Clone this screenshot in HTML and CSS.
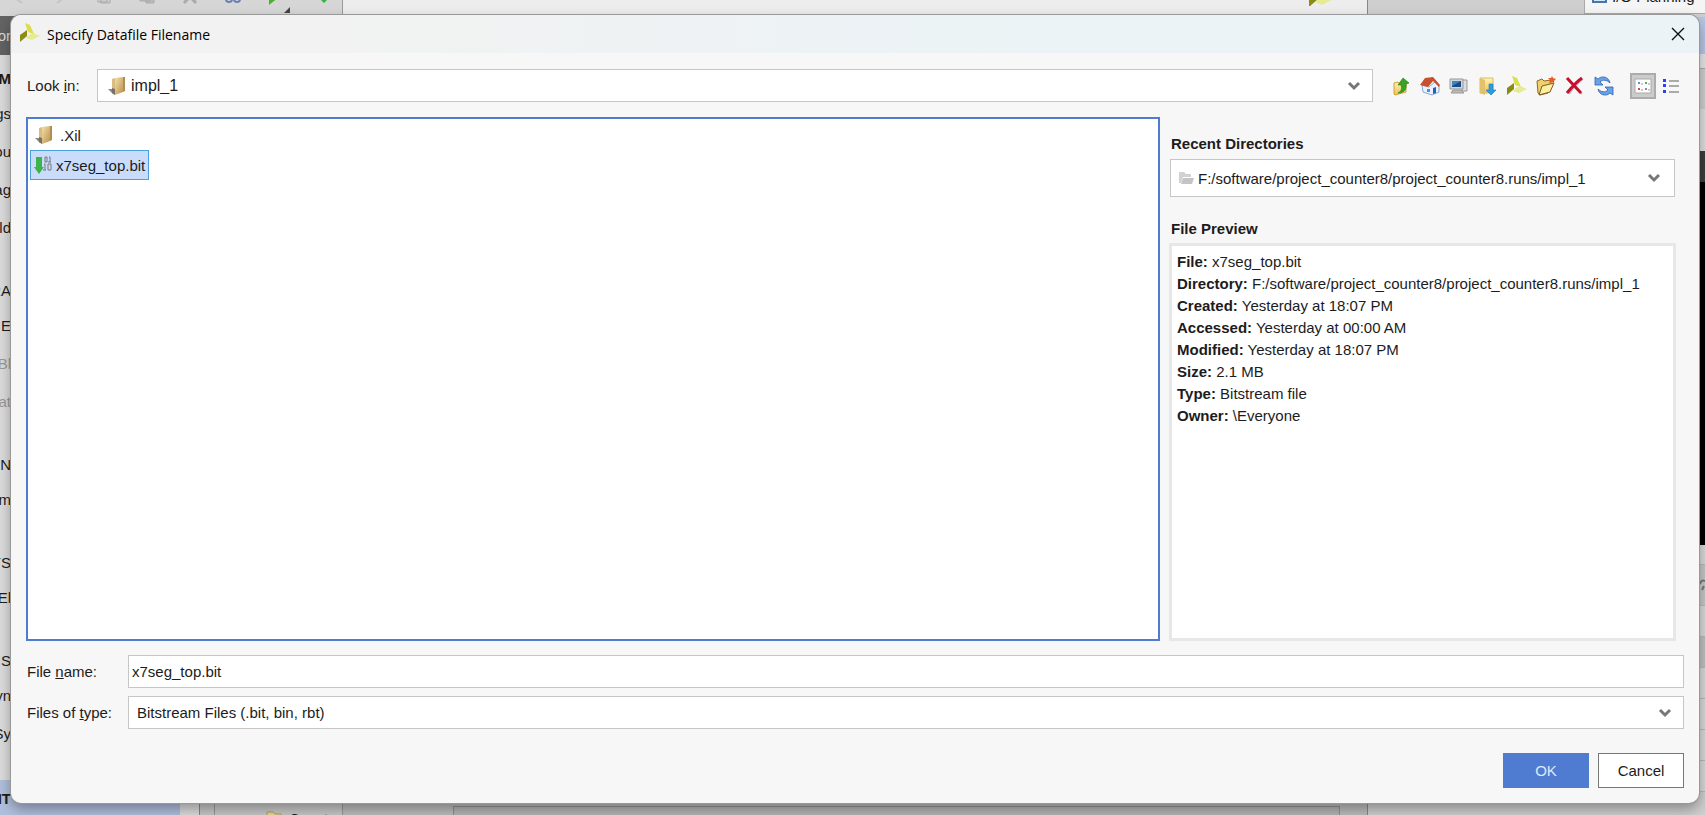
FILE: index.html
```html
<!DOCTYPE html>
<html lang="en">
<head>
    <meta charset="UTF-8">
    <meta name="viewport" content="width=device-width, initial-scale=1.0">
    <title>Specify Datafile Filename</title>
    <link rel="stylesheet" href="styles.css">
</head>
<body>
    <!-- Shared icons -->
    <svg class="defs" aria-hidden="true">
        <defs>
            <linearGradient id="gold" x1="0" y1="0" x2="1" y2="1">
                <stop offset="0" stop-color="#f3dfa6"/>
                <stop offset="1" stop-color="#bb9250"/>
            </linearGradient>
            <linearGradient id="yellow" x1="0" y1="0" x2="0" y2="1">
                <stop offset="0" stop-color="#fdf3b4"/>
                <stop offset="1" stop-color="#f0c04c"/>
            </linearGradient>
            <symbol id="logo" viewBox="0 0 20 20">
                <path d="M5 0l5 2 4 9-6-2z" fill="#d9de4a"/>
                <path d="M0 12l7-5v6l-7 6z" fill="#8c8c10"/>
                <path d="M9 12l4-2 7 3-8 4-6-2z" fill="#e6ea90"/>
            </symbol>
            <symbol id="folder" viewBox="0 0 20 20">
                <path d="M1 13h5v5z" fill="#8a8782"/>
                <path d="M5 3l3-1v17l-3-2z" fill="#d9bd83"/>
                <path d="M8 2l8-1v15l-8 3z" fill="url(#gold)"/>
                <path d="M16 1h2v14l-2 1z" fill="#b08d52"/>
                <path d="M5 12l3 1v6l-3-2z" fill="#77706a"/>
            </symbol>
            <symbol id="chevron" viewBox="0 0 14 10">
                <path d="M2 2l5 5 5-5" fill="none" stroke="#777" stroke-width="3"/>
            </symbol>
        </defs>
    </svg>

    <!-- Main window behind the dialog -->
    <div class="app">
        <div class="left-pane">
            <div class="app-toolbar">
                <svg width="16" height="16" viewBox="0 0 16 16"><path d="M12 3L4 9l8 6" fill="none" stroke="#c4c4c4" stroke-width="2"/></svg>
                <svg width="16" height="16" viewBox="0 0 16 16"><path d="M4 3l8 6-8 6" fill="none" stroke="#c4c4c4" stroke-width="2"/></svg>
                <svg width="16" height="16" viewBox="0 0 16 16"><path d="M2 1h9v13H2zM5 4h9v11H5z" fill="#ccc" stroke="#aaa"/></svg>
                <svg width="16" height="16" viewBox="0 0 16 16"><path d="M1 1h10v12H1zM7 6h8v9H7z" fill="#bbb" stroke="#aaa"/></svg>
                <svg width="16" height="16" viewBox="0 0 16 16"><path d="M2 2l12 13M14 2L2 15" stroke="#aaa" stroke-width="3"/></svg>
                <svg width="16" height="16" viewBox="0 0 16 16"><circle cx="4" cy="11" r="3" fill="none" stroke="#6a80b4" stroke-width="2"/><circle cx="12" cy="11" r="3" fill="none" stroke="#6a80b4" stroke-width="2"/></svg>
                <svg width="24" height="24" viewBox="0 0 24 24"><path d="M1 0l10 7-10 8z" fill="#46b32c"/><path d="M22 17v6h-6z" fill="#444"/></svg>
                <svg width="16" height="16" viewBox="0 0 16 16"><path d="M3 4h4v6h3l-5 5-5-5h3z" fill="#36b14b"/><path d="M11 6v6M14 6v6" stroke="#666"/></svg>
            </div>
            <div class="left-body">
                <nav class="flow">
                    <div class="flow-title"><span>or</span></div>
                    <div class="flow-group">
                        <div class="flow-head strong"><span>M</span></div>
                        <div class="flow-item"><span>gs</span></div>
                        <div class="flow-item"><span>ou</span></div>
                        <div class="flow-item"><span>ag</span></div>
                        <div class="flow-item"><span>ald</span></div>
                    </div>
                    <div class="flow-group">
                        <div class="flow-head"><span>RA</span></div>
                        <div class="flow-item"><span>E</span></div>
                        <div class="flow-item off"><span>Bl</span></div>
                        <div class="flow-item off"><span>at</span></div>
                    </div>
                    <div class="flow-group">
                        <div class="flow-head"><span>ON</span></div>
                        <div class="flow-item"><span>m</span></div>
                    </div>
                    <div class="flow-group">
                        <div class="flow-head"><span>YS</span></div>
                        <div class="flow-item"><span>El</span></div>
                    </div>
                    <div class="flow-group">
                        <div class="flow-head"><span>IS</span></div>
                        <div class="flow-item"><span>yn</span></div>
                        <div class="flow-item"><span>Sy</span></div>
                    </div>
                    <div class="flow-head strong current"><span>IT</span></div>
                </nav>
                <div class="tree">
                    <div class="tree-row">
                        <svg width="16" height="13" viewBox="0 0 16 13"><path d="M1 1h6l2 2h6v9H1z" fill="#e5d79b" stroke="#b5a050"/></svg>
                        <span>Const</span>
                    </div>
                </div>
            </div>
        </div>
        <div class="mid-pane">
            <div class="mid-top"><svg width="34" height="20"><use href="#logo" width="34" height="22"/></svg></div>
            <div class="mid-box"></div>
        </div>
        <div class="right-pane">
            <div class="right-top">
                <div class="layout-picker">
                    <svg width="16" height="16" viewBox="0 0 16 16"><path d="M1 1h13v13H1z" fill="#cdeaf8" stroke="#4d74a8" stroke-width="2"/></svg>
                    <span>I/O Planning</span>
                </div>
            </div>
            <div class="bar blue"></div>
            <div class="bar pale"></div>
            <div class="bar grey"></div>
            <div class="bar light"></div>
            <div class="bar dark"></div>
            <div class="canvas"></div>
            <div class="rows">
                <div class="row short"></div>
                <div class="row tall">
                    <svg width="6" height="14" viewBox="0 0 6 14"><path d="M1 6c1-4 3-4 5-3M3 12l2-4" fill="none" stroke="#777" stroke-width="2"/></svg>
                </div>
                <div class="row"></div>
                <div class="row head"></div>
                <div class="row"></div>
                <div class="row"></div>
                <div class="row"></div>
                <div class="row"></div>
            </div>
        </div>
    </div>

    <form class="dialog" role="dialog" aria-labelledby="dialogTitle">
        <header class="titlebar">
            <svg class="title-icon" width="20" height="20"><use href="#logo"/></svg>
            <h1 id="dialogTitle">Specify Datafile Filename</h1>
            <button type="button" class="close" aria-label="Close">
                <svg width="14" height="14" viewBox="0 0 14 14"><path d="M1 1l12 12M13 1L1 13" stroke="#111" stroke-width="1.4"/></svg>
            </button>
        </header>

        <div class="content">
            <div class="look-row">
                <label for="lookIn">Look <u>i</u>n:</label>
                <div class="combo look-combo">
                    <svg width="20" height="20"><use href="#folder"/></svg>
                    <select id="lookIn"><option>impl_1</option></select>
                    <svg class="arrow" width="14" height="10"><use href="#chevron"/></svg>
                </div>
                <div class="tools">
                    <button type="button" aria-label="Up one level">
                        <svg width="20" height="20" viewBox="0 0 20 20">
                            <path d="M3 7l4-1 1 1h7v9l-11 3-1-1z" fill="url(#yellow)" stroke="#d1a23c"/>
                            <path d="M7 17c4-2 4-5 3-8H7l5-7 6 5-3 1c1 5-2 9-8 9z" fill="#38a324" stroke="#1f7a18" stroke-width=".6"/>
                        </svg>
                    </button>
                    <button type="button" aria-label="Home">
                        <svg width="20" height="20" viewBox="0 0 20 20">
                            <path d="M2 9l7 2 7-6 3 5v6l-7 3-9-3z" fill="#eaf2fc" stroke="#85a9d8"/>
                            <path d="M0 9l5-7 8-1 7 8-1 2-6-6-5 6z" fill="#c8502c"/>
                            <path d="M13 12l3-1v6l-3 1z" fill="#2463b4"/>
                            <path d="M7 13h3v3H7z" fill="#4f8fd8"/>
                        </svg>
                    </button>
                    <button type="button" aria-label="Computer">
                        <svg width="20" height="20" viewBox="0 0 20 20">
                            <path d="M13 4h5v11h-5z" fill="#ddd" stroke="#999"/>
                            <path d="M1 3h13v10H1z" fill="#d4d4d4" stroke="#999"/>
                            <path d="M3 5h9v6H3z" fill="#174c8c"/>
                            <path d="M3 5h9l-9 5z" fill="#3b84c4"/>
                            <path d="M4 14h8l3 3H2z" fill="#bbb" stroke="#999"/>
                        </svg>
                    </button>
                    <button type="button" aria-label="Downloads">
                        <svg width="20" height="20" viewBox="0 0 20 20">
                            <path d="M2 2h13v15H2z" fill="url(#yellow)" stroke="#d8ba6b"/>
                            <path d="M2 2l5 2v15l-5-2z" fill="#e3c06a"/>
                            <path d="M11 8h4v6h3l-5 5-5-5h3z" fill="#2d9be0" stroke="#1b7cc0" stroke-width=".6"/>
                        </svg>
                    </button>
                    <button type="button" aria-label="Install directory">
                        <svg width="20" height="20"><use href="#logo"/></svg>
                    </button>
                    <button type="button" aria-label="New folder">
                        <svg width="20" height="20" viewBox="0 0 20 20">
                            <path d="M1 5l5-2 2 2 7-1v4l-3 9-8 2-2-2z" fill="#f3cf6c" stroke="#8b6a20"/>
                            <path d="M6 10l12-3-4 9-11 3z" fill="#fdeea4" stroke="#7a5c1a"/>
                            <path d="M16 0l1 2 3 1-2 2v3l-2-2-3 1 1-3-2-2 3 0z" fill="#ee5a24"/>
                        </svg>
                    </button>
                    <button type="button" aria-label="Delete">
                        <svg width="20" height="20" viewBox="0 0 20 20">
                            <path d="M4 4l13 14M18 3C12 7 8 12 4 18" fill="none" stroke="#bbb" stroke-width="2"/>
                            <path d="M2 2l14 15M17 2C11 6 7 11 2 17" fill="none" stroke="#c4122e" stroke-width="3"/>
                        </svg>
                    </button>
                    <button type="button" aria-label="Refresh">
                        <svg width="20" height="20" viewBox="0 0 20 20">
                            <path d="M1 1v8h8L6 6c3-3 7-2 10 1C15 1 8-1 4 3z" fill="#6ba2e6" stroke="#2b62b4" stroke-width=".8"/>
                            <path d="M19 19v-8h-8l3 3c-3 3-7 2-10-1 1 6 8 8 12 4z" fill="#6ba2e6" stroke="#2b62b4" stroke-width=".8"/>
                        </svg>
                    </button>
                </div>
                <div class="views">
                    <button type="button" class="pressed" aria-label="Icon view">
                        <svg width="20" height="20" viewBox="0 0 20 20">
                            <path d="M2 3h16v14H2z" fill="#fff" stroke="#aaa"/>
                            <path d="M5 6h2v2H5z" fill="#5a8fe0"/><path d="M12 6h2v2h-2z" fill="#4fae62"/>
                            <path d="M5 12h2v2H5z" fill="#d4494f"/><path d="M12 12h2v2h-2z" fill="#8a8f98"/>
                            <path d="M8 8h2M15 8h2M8 14h2M15 14h2" stroke="#999"/>
                        </svg>
                    </button>
                    <button type="button" aria-label="List view">
                        <svg width="18" height="18" viewBox="0 0 18 18">
                            <path d="M1 2h3v3H1zM1 7h3v3H1zM1 13h3v3H1z" fill="#2a40ff"/>
                            <path d="M7 4h10M7 9h10M7 15h10" stroke="#aaa" stroke-width="2"/>
                        </svg>
                    </button>
                </div>
            </div>

            <div class="browser">
                <ul class="files">
                    <li><button type="button" class="file">
                        <svg width="20" height="20"><use href="#folder"/></svg>
                        <span class="folder-name">.Xil</span>
                    </button></li>
                    <li><button type="button" class="file selected">
                        <svg width="18" height="20" viewBox="0 0 18 20">
                            <path d="M2 2h6v10h2l-5 7-5-7h2z" fill="#3cb44a"/>
                            <g fill="none" stroke="#777">
                                <path d="M11 2h2v5h-2zM15 2h1v5M14 7h3"/>
                                <path d="M10 9h1v6M9 15h3M14 9h3v6h-3z"/>
                            </g>
                        </svg>
                        <span>x7seg_top.bit</span>
                    </button></li>
                </ul>

                <aside class="side">
                    <label class="side-title" for="recent">Recent Directories</label>
                    <div class="combo recent-combo">
                        <svg width="16" height="16" viewBox="0 0 16 16">
                            <path d="M1 2h5l2 2h5v3H5l-2 6H1z" fill="#d2d2d2"/>
                            <path d="M5 8h11l-2 6H3z" fill="#c4c4c4"/>
                        </svg>
                        <select id="recent"><option>F:/software/project_counter8/project_counter8.runs/impl_1</option></select>
                        <svg class="arrow" width="14" height="10"><use href="#chevron"/></svg>
                    </div>
                    <h2 class="side-title">File Preview</h2>
                    <div class="preview">
                        <p><b>File:</b> x7seg_top.bit</p>
                        <p><b>Directory:</b> F:/software/project_counter8/project_counter8.runs/impl_1</p>
                        <p><b>Created:</b> Yesterday at 18:07 PM</p>
                        <p><b>Accessed:</b> Yesterday at 00:00 AM</p>
                        <p><b>Modified:</b> Yesterday at 18:07 PM</p>
                        <p><b>Size:</b> 2.1 MB</p>
                        <p><b>Type:</b> Bitstream file</p>
                        <p><b>Owner:</b> \Everyone</p>
                    </div>
                </aside>
            </div>

            <div class="fields">
                <label for="fileName">File <u>n</u>ame:</label>
                <input type="text" id="fileName" value="x7seg_top.bit">
                <label for="fileType">Files of <u>t</u>ype:</label>
                <div class="combo">
                    <select id="fileType"><option>Bitstream Files (.bit, bin, rbt)</option></select>
                    <svg class="arrow" width="14" height="10"><use href="#chevron"/></svg>
                </div>
            </div>

            <div class="actions">
                <button type="submit" class="btn primary">OK</button>
                <button type="button" class="btn">Cancel</button>
            </div>
        </div>
    </form>
</body>
</html>
```

FILE: styles.css
```css
* {
    box-sizing: border-box;
}
body {
    margin: 0;
    height: 100vh;
    overflow: hidden;
    font-family: "Liberation Sans", Arial, sans-serif;
    font-size: 15px;
    color: #1c1c1c;
}
button, input, select {
    font: inherit;
    color: inherit;
}
svg {
    display: block;
    flex: none;
}
h1, h2, p, ul {
    margin: 0;
    padding: 0;
}
.defs {
    position: absolute;
    width: 0;
    height: 0;
}

/* main window */
.app {
    display: flex;
    height: 100%;
    background-color: #d0d0d0;
}
.left-pane {
    width: 343px;
    display: flex;
    flex-direction: column;
    border-right: 1px solid #999;
    background-color: #c8c8c8;
}
.app-toolbar {
    height: 16px;
    flex: none;
    display: flex;
    align-items: flex-end;
    gap: 27px;
    padding: 0 10px 2px;
    overflow: hidden;
    background-color: #d6d6d6;
}
.app-toolbar svg {
    margin-bottom: 10px;
}
.app-toolbar svg:nth-child(7) {
    margin-bottom: 0;
}
.left-body {
    flex: 1;
    min-height: 0;
    display: flex;
}
.flow {
    width: 200px;
    border-right: 1px solid #888;
    background-color: #dcdcdc;
    overflow: hidden;
}
.flow span {
    width: 11px;
    display: flex;
    justify-content: flex-end;
}
.flow-title {
    height: 39px;
    margin-bottom: 7px;
    display: flex;
    align-items: center;
    background-color: #636363;
    color: #ddd;
}
.flow-group {
    margin-bottom: 28px;
}
.flow-head, .flow-item {
    height: 32px;
    display: flex;
    align-items: center;
}
.flow-item {
    height: 38px;
}
.strong {
    font-weight: bold;
}
.off {
    color: #999;
}
.current {
    height: 36px;
    width: 180px;
    background-color: #b0bfdc;
}
.tree {
    flex: 1;
    margin-left: 14px;
    display: flex;
    align-items: flex-end;
    border-left: 1px solid #999;
    overflow: hidden;
}
.tree-row {
    height: 4px;
    display: flex;
    gap: 7px;
    padding-left: 51px;
    line-height: 16px;
}
.mid-pane {
    flex: 1;
    display: flex;
    flex-direction: column;
    justify-content: space-between;
    border-right: 1px solid #888;
    background-color: #bdbdbd;
}
.mid-top {
    height: 15px;
    padding-right: 30px;
    display: flex;
    align-items: flex-end;
    justify-content: flex-end;
    overflow: hidden;
    background-color: #ededed;
}
.mid-top svg {
    margin-bottom: 9px;
}
.mid-box {
    height: 9px;
    margin: 0 27px 0 110px;
    border: 1px solid #909090;
    border-bottom: 0;
    background-color: #b5b5b5;
}
.right-pane {
    width: 337px;
    display: flex;
    flex-direction: column;
    background-color: #cfcfcf;
}
.right-top {
    height: 17px;
    flex: none;
    display: flex;
    justify-content: flex-end;
    overflow: hidden;
}
.layout-picker {
    width: 121px;
    height: 14px;
    padding: 0 8px 0 7px;
    display: flex;
    align-items: flex-end;
    gap: 4px;
    white-space: nowrap;
    line-height: 14px;
    border-left: 1px solid #aaa;
    border-bottom: 1px solid #aaa;
    background-color: #f5f5f5;
}
.layout-picker svg, .layout-picker span {
    margin-bottom: 9px;
}
.bar {
    flex: none;
}
.blue {
    height: 37px;
    background-color: #b6c5e4;
}
.pale {
    height: 15px;
    border-bottom: 1px solid #aaa;
    background-color: #e6e6e6;
}
.grey {
    height: 40px;
    background-color: #cecece;
}
.light {
    height: 42px;
    background-color: #dedede;
}
.dark {
    height: 31px;
    background-color: #3c3c3c;
}
.canvas {
    flex: 1;
    background-color: #000;
}
.rows {
    flex: none;
    height: 270px;
    overflow: hidden;
}
.row {
    height: 31px;
    border-bottom: 1px solid #b8b8b8;
    background-color: #d8d8d8;
}
.short {
    height: 20px;
}
.tall {
    height: 41px;
    display: flex;
    align-items: center;
    justify-content: flex-end;
    background-color: #c6c6c6;
}
.head {
    background-color: #c0c0c0;
}

/* dialog */
.dialog {
    position: absolute;
    top: 15px;
    right: 6px;
    bottom: 12px;
    left: 11px;
    display: flex;
    flex-direction: column;
    border-radius: 10px;
    background-color: #f7f7f7;
    box-shadow: 0 0 0 1px #999, 0 6px 14px rgba(0, 0, 0, 0.35);
    overflow: hidden;
}
.titlebar {
    height: 38px;
    flex: none;
    display: flex;
    align-items: center;
    gap: 7px;
    padding: 0 6px 0 9px;
    background: linear-gradient(to right, #f2f2f2 20%, #ebf3f6 60%);
}
.titlebar h1 {
    flex: 1;
    font-family: "Open Sans", "Noto Sans", sans-serif;
    font-size: 14px;
    font-weight: normal;
    color: #000;
}
.title-icon {
    margin-bottom: 2px;
}
.close {
    width: 30px;
    height: 30px;
    padding: 0;
    display: flex;
    align-items: center;
    justify-content: center;
    border: none;
    background: none;
}
.content {
    flex: 1;
    min-height: 0;
    display: flex;
    flex-direction: column;
    padding: 16px 15px 15px;
}
.look-row {
    display: flex;
    align-items: center;
    margin-bottom: 15px;
}
.look-row label {
    width: 71px;
}
.look-row label, .fields label {
    padding-left: 1px;
}
.combo {
    height: 33px;
    display: flex;
    align-items: center;
    padding-right: 11px;
    border: 1px solid #c6c6c6;
    background-color: #fff;
}
.combo select {
    flex: 1;
    min-width: 0;
    height: 100%;
    padding: 0 8px;
    border: none;
    outline: none;
    appearance: none;
    background: none;
}
.look-combo {
    flex: 1;
    padding-left: 9px;
}
.look-combo select {
    padding: 0 4px;
    font-size: 16px;
}
.tools {
    display: flex;
    gap: 1px;
    margin-left: 14px;
}
.tools button, .views button {
    width: 28px;
    height: 26px;
    padding: 0;
    display: flex;
    align-items: center;
    justify-content: center;
    border: none;
    background: none;
}
.views {
    display: flex;
    gap: 2px;
    margin-left: 12px;
}
.views button {
    width: 26px;
}
.views .pressed {
    border: 2px solid #acacac;
    background-color: #ccc;
}
.browser {
    flex: 1;
    min-height: 0;
    display: flex;
    gap: 9px;
}
.files {
    flex: 1;
    padding: 1px 2px;
    list-style: none;
    border: 2px solid #4f7bd0;
    background-color: #fff;
}
.file {
    height: 30px;
    display: flex;
    align-items: center;
    gap: 4px;
    padding: 0 3px;
    border: 1px solid transparent;
    background: none;
}
.folder-name {
    padding-left: 2px;
}
.selected {
    border-color: #4a9fdc;
    background-color: #c9dcfc;
}
.side {
    width: 507px;
    margin-right: 8px;
    display: flex;
    flex-direction: column;
}
.side-title {
    padding-left: 2px;
    font-size: 15px;
    font-weight: bold;
    line-height: 20px;
}
.side label {
    margin: 17px 0 5px;
}
.side h2 {
    margin: 22px 0 4px;
}
.recent-combo {
    height: 38px;
    flex: none;
    margin: 0 1px;
    padding-left: 7px;
    padding-right: 13px;
}
.recent-combo select {
    padding: 0 4px;
}
.preview {
    flex: 1;
    padding: 5px;
    line-height: 22px;
    border: 3px solid #e7e7e7;
    background-color: #fff;
}
.fields {
    display: grid;
    grid-template-columns: 102px 1fr;
    row-gap: 8px;
    align-items: center;
    margin-top: 14px;
}
.fields input {
    height: 33px;
    min-width: 0;
    padding: 0 3px;
    border: 1px solid #c6c6c6;
    outline: none;
    background-color: #fff;
}
.actions {
    display: flex;
    justify-content: flex-end;
    gap: 9px;
    margin-top: 24px;
}
.btn {
    width: 86px;
    height: 35px;
    border: 1px solid #777;
    background-color: #fff;
}
.primary {
    border-color: #4f7bd0;
    background-color: #4f7bd0;
    color: #dfe8fa;
}
```
